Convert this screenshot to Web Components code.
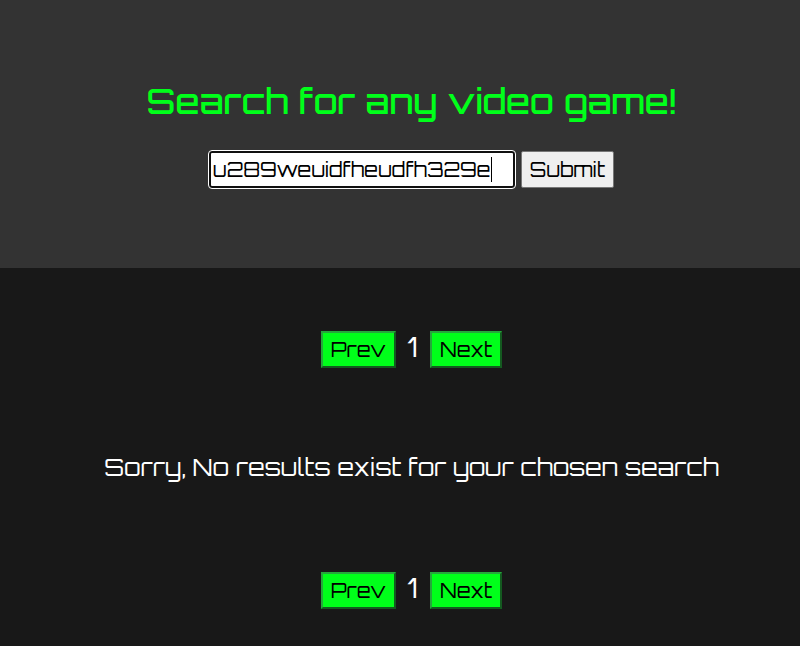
<!DOCTYPE html>
<html lang="en">
<head>
<meta charset="utf-8">
<meta name="viewport" content="width=device-width, initial-scale=1">
<title>Video game search</title>
<style>
  body { margin: 0; min-height: 100vh; background: #181818; color: #fff; font-family: Orbitron, "DejaVu Sans", sans-serif; }
</style>
</head>
<body>
<game-app></game-app>
<script>
class GameSearch extends HTMLElement {
  constructor() {
    super();
    this.attachShadow({ mode: "open" }).innerHTML = `
      <style>
        :host { display: block; box-sizing: border-box; padding: 76px 0 80px 23px; background: #333; text-align: center; }
        h1 { margin: 0 0 25px; font-size: 35px; font-weight: 500; line-height: 50px; color: #00ff1a; }
        form { display: flex; justify-content: center; align-items: center; gap: 6px; }
        input, button { box-sizing: border-box; height: 37px; font: 20px/30px Orbitron, "DejaVu Sans", sans-serif; color: #000; border-radius: 2px; }
        .field { position: relative; display: flex; width: 306px; }
        input { width: 100%; margin: 0; padding: 0 2px; border: 2px solid #101010; outline: 1px solid #fff; background: #fff; border-radius: 3px; caret-color: transparent; }
        .caret { position: absolute; top: 6px; right: 23px; width: 1px; height: 25px; background: #000; }
        button { padding: 0 8px; border: 1px solid #767676; background: #efefef; }
      </style>
      <h1><slot></slot></h1>
      <form>
        <span class="field"><input type="text" aria-label="Video game" value="u289weuidfheudfh329e"><span class="caret"></span></span>
        <button type="submit">Submit</button>
      </form>`;
    this.shadowRoot.querySelector("form").addEventListener("submit", e => e.preventDefault());
  }
}
class PageSwitcher extends HTMLElement {
  constructor() {
    super();
    this.attachShadow({ mode: "open" }).innerHTML = `
      <style>
        :host { display: flex; justify-content: center; align-items: flex-start; gap: 10px; height: 37px; font-size: 28px; line-height: 32px; }
        button { box-sizing: border-box; height: 37px; padding: 0 8px; border: 2px solid; border-color: #26a63c #145a20 #145a20 #26a63c; background: #00ff1a; color: #000; font: 20px/30px Orbitron, "DejaVu Sans", sans-serif; }
        span { min-width: 14px; text-align: center; }
      </style>
      <button type="button">Prev</button><span><slot></slot></span><button type="button">Next</button>`;
  }
}
class ResultMessage extends HTMLElement {
  constructor() {
    super();
    this.attachShadow({ mode: "open" }).innerHTML = `
      <style>
        :host { display: block; text-align: center; }
        p { margin: 0; font-size: 24px; line-height: 36px; }
      </style>
      <p><slot></slot></p>`;
  }
}
customElements.define("game-search", GameSearch);
customElements.define("page-switcher", PageSwitcher);
customElements.define("result-message", ResultMessage);
customElements.define("game-app", class extends HTMLElement {
  constructor() {
    super();
    this.attachShadow({ mode: "open" }).innerHTML = `
      <style>
        :host { display: block; }
        main { display: grid; padding: 63px 0 36px 23px; }
        result-message { padding: 81px 0 87px; }
      </style>
      <game-search>Search for any video game!</game-search>
      <main>
        <page-switcher>1</page-switcher>
        <result-message>Sorry, No results exist for your chosen search</result-message>
        <page-switcher>1</page-switcher>
      </main>`;
  }
});
</script>
</body>
</html>
